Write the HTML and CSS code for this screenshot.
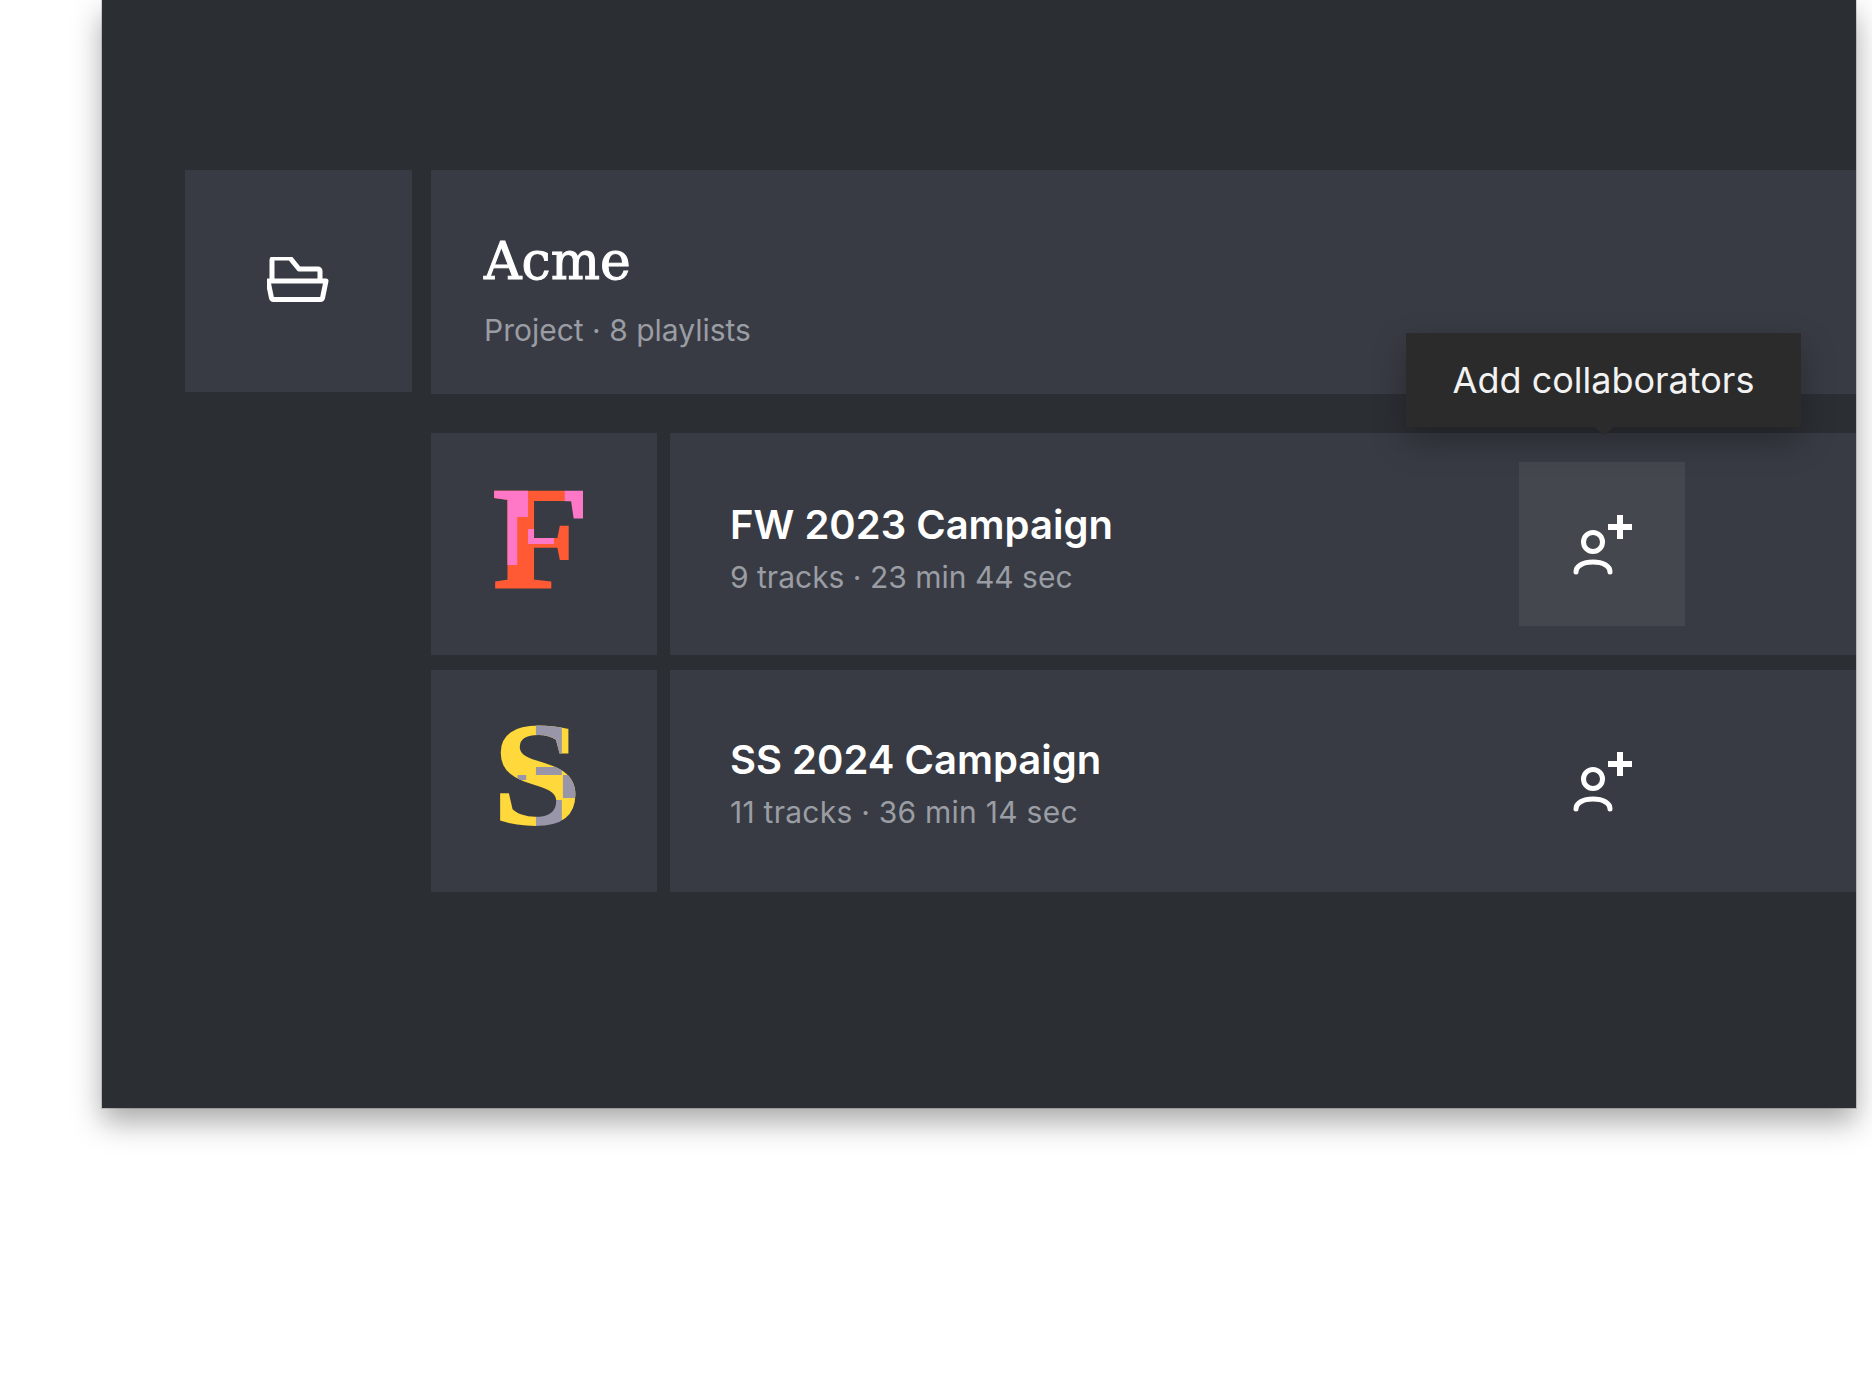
FILE: index.html
```html
<!DOCTYPE html>
<html lang="en">
<head>
  <meta charset="UTF-8" />
  <meta name="viewport" content="width=device-width, initial-scale=1.0" />
  <title>Acme</title>
  <link rel="stylesheet" href="styles.css">
</head>
<body>
  <div class="window">
    <div class="project">
      <div class="folder">
        <svg class="folder-icon" viewBox="2 2 64 48" width="64" height="48">
          <path d="M7 26V5a2 2 0 0 1 2-2h16l9 11h19a2 2 0 0 1 2 2v10" />
          <path d="M3 26h58l-3.500 17a2 2 0 0 1-2 1.500H8.500a2 2 0 0 1-2-1.500z" />
        </svg>
      </div>
      <div class="project-info">
        <h1>Acme</h1>
        <p>Project · 8 playlists</p>
      </div>
    </div>

    <div class="playlists">
      <div class="row">
        <div class="thumb thumb-f"><span class="mark mark-f">F</span></div>
        <div class="row-main">
          <div class="row-text">
            <h2>FW 2023 Campaign</h2>
            <p>9 tracks · 23 min 44 sec</p>
          </div>
          <button class="add add-active">
            <span class="tooltip">Add collaborators</span>
            <svg class="add-icon" viewBox="0 0 64 64" width="64" height="64">
              <circle cx="23" cy="30" r="9.500" />
              <path d="M6 60C6 54 13 50 23 50S40 54 40 60" />
              <path class="plus" d="M50 3V27M38 15H62" />
            </svg>
          </button>
        </div>
      </div>

      <div class="row">
        <div class="thumb thumb-s"><span class="mark mark-s">S</span></div>
        <div class="row-main">
          <div class="row-text">
            <h2>SS 2024 Campaign</h2>
            <p>11 tracks · 36 min 14 sec</p>
          </div>
          <button class="add">
            <svg class="add-icon" viewBox="0 0 64 64" width="64" height="64">
              <circle cx="23" cy="30" r="9.500" />
              <path d="M6 60C6 54 13 50 23 50S40 54 40 60" />
              <path class="plus" d="M50 3V27M38 15H62" />
            </svg>
          </button>
        </div>
      </div>
    </div>
  </div>
</body>
</html>
```

FILE: styles.css
```css
body {
  margin: 0;
  min-height: 100vh;
  background: #fff;
  font-family: Inter, 'Noto Sans', sans-serif;
  color: #fff;
}
h1, h2, p {
  margin: 0;
}
.window {
  box-sizing: border-box;
  margin-left: 102px;
  width: 1754px;
  height: 1108px;
  padding: 170px 0 0 83px;
  background: #2b2e33;
  box-shadow: 0 0 0 1px rgba(0,0,0,0.15), 0 14px 28px rgba(0,0,0,0.34);
}
.project {
  display: flex;
  gap: 19px;
}
.folder {
  width: 227px;
  height: 222px;
  background: #383b43;
  display: flex;
  align-items: center;
  justify-content: center;
}
.folder-icon path {
  fill: none;
  stroke: #fff;
  stroke-width: 5;
  stroke-linejoin: round;
}
.project-info {
  flex: 1;
  height: 224px;
  box-sizing: border-box;
  padding: 54px 0 0 53px;
  background: #383b43;
}
.project-info h1 {
  font-family: 'DejaVu Serif', serif;
  font-size: 52px;
  font-weight: 400;
  line-height: 74px;
  -webkit-text-stroke: 1px #fff;
}
.project-info p {
  margin-top: 13px;
  font-size: 30px;
  line-height: 38px;
  color: #9a9da3;
}
.playlists {
  margin: 39px 0 0 246px;
  display: flex;
  flex-direction: column;
  gap: 15px;
}
.row {
  display: flex;
  gap: 13px;
  height: 222px;
}
.thumb {
  width: 226px;
  box-sizing: border-box;
  background: #383b43;
}
.thumb-f {
  padding: 46px 0 0 55px;
}
.thumb-s {
  padding: 45px 0 0 51px;
}
.mark {
  display: block;
  width: 110px;
  height: 120px;
  line-height: 120px;
  text-align: center;
  font-family: 'Liberation Serif', serif;
  font-size: 147px;
  font-weight: 700;
  color: transparent;
  -webkit-text-stroke: 2px transparent;
  -webkit-background-clip: text;
  background-clip: text;
}
.mark-f {
  transform: scaleX(1.08);
  background-color: #ff5a33;
  background-image:
    linear-gradient(#ff78c8, #ff78c8),
    linear-gradient(#ff78c8, #ff78c8),
    linear-gradient(#ff78c8, #ff78c8),
    linear-gradient(#ff78c8, #ff78c8);
  background-repeat: no-repeat;
  background-position: 0 0, 0 38px, 43px 50px, 77px 0;
  background-size: 43px 38px, 33px 48px, 24px 15px, 33px 42px;
}
.mark-s {
  transform: scaleX(1.08);
  background-color: #ffd83c;
  background-image:
    linear-gradient(#9896a8, #9896a8),
    linear-gradient(#9896a8, #9896a8),
    linear-gradient(#9896a8, #9896a8),
    linear-gradient(#9896a8, #9896a8),
    linear-gradient(#9896a8, #9896a8);
  background-repeat: no-repeat;
  background-position: 54px 0, 54px 52px, 37px 60px, 79px 60px, 54px 85px;
  background-size: 24px 45px, 24px 8px, 8px 5px, 20px 23px, 24px 35px;
}
.row-main {
  flex: 1;
  display: flex;
  align-items: center;
  justify-content: space-between;
  padding: 0 171px 0 60px;
  background: #383b43;
}
.row-text {
  padding-top: 14px;
}
.row + .row .row-text {
  padding-top: 10px;
}
.row-text h2 {
  font-size: 40px;
  font-weight: 600;
  line-height: 53px;
}
.row-text p {
  font-size: 30px;
  line-height: 53px;
  color: #9a9da3;
}
.row + .row .row-text p {
  letter-spacing: 0.25px;
}
.add {
  position: relative;
  width: 166px;
  height: 164px;
  padding: 0;
  border: none;
  background: none;
  display: flex;
  align-items: center;
  justify-content: center;
}
.add-active {
  background: #44474e;
}
.add-icon circle,
.add-icon path {
  fill: none;
  stroke: #fff;
  stroke-width: 5;
  stroke-linecap: round;
}
.add-icon .plus {
  stroke-width: 6;
  stroke-linecap: butt;
}
.tooltip {
  position: absolute;
  left: -113px;
  bottom: 199px;
  width: 395px;
  height: 94px;
  display: flex;
  align-items: center;
  justify-content: center;
  background: #2b2b2b;
  font-family: Inter, sans-serif;
  font-size: 36px;
  color: #f2f2f2;
  box-shadow: 0 14px 34px rgba(0,0,0,0.28);
}
.tooltip::after {
  content: "";
  position: absolute;
  left: 50%;
  bottom: -8px;
  margin-left: -10px;
  border-top: 8px solid #2b2b2b;
  border-left: 10px solid transparent;
  border-right: 10px solid transparent;
}
```
